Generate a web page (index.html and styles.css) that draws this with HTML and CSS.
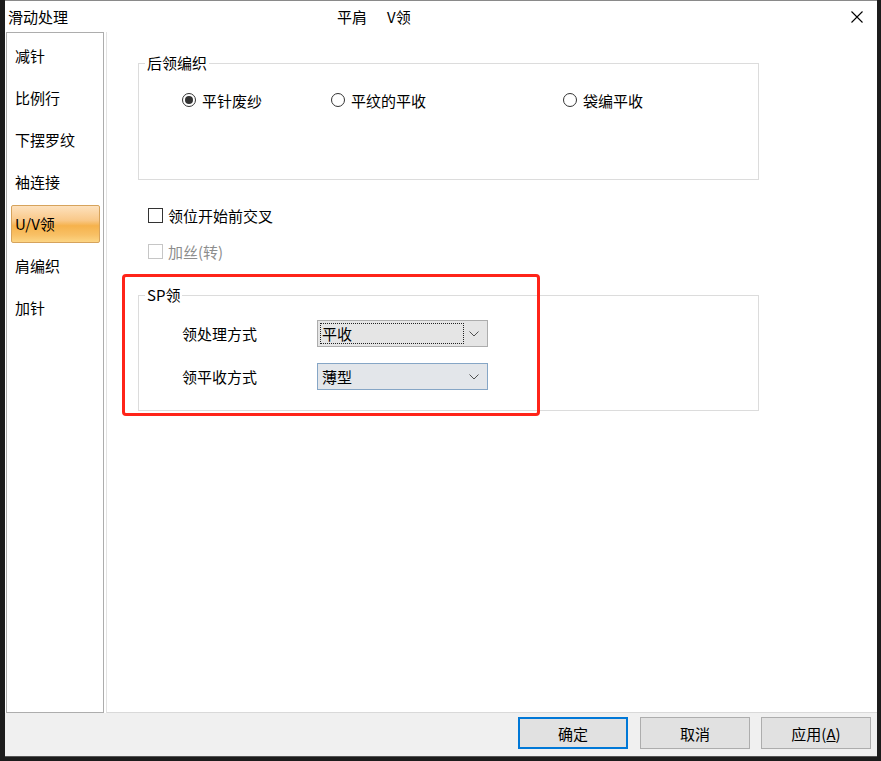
FILE: index.html
```html
<!DOCTYPE html>
<html lang="zh-CN">
<head>
    <meta charset="UTF-8">
    <title>滑动处理</title>
    <link rel="stylesheet" href="styles.css">
</head>
<body>
    <div class="window">
        <div class="titlebar">
            <span class="title">滑动处理</span>
            <span class="subtitle">平肩</span>
            <span class="subtitle second">V领</span>
            <svg class="close" width="12" height="12" viewBox="0 0 12 12">
                <path d="M0.5 0.5 L11.5 11.5 M11.5 0.5 L0.5 11.5" stroke="#000" stroke-width="1.1" fill="none"/>
            </svg>
        </div>

        <div class="main">
            <ul class="nav">
                <li>减针</li>
                <li>比例行</li>
                <li>下摆罗纹</li>
                <li>袖连接</li>
                <li class="active">U/V领</li>
                <li>肩编织</li>
                <li>加针</li>
            </ul>

            <div class="content">
                <fieldset class="group group-back">
                    <legend>后领编织</legend>
                    <div class="radio-row">
                        <label class="radio first"><span class="dot checked"></span>平针废纱</label>
                        <label class="radio second"><span class="dot"></span>平纹的平收</label>
                        <label class="radio"><span class="dot"></span>袋编平收</label>
                    </div>
                </fieldset>

                <label class="check"><span class="box"></span>领位开始前交叉</label>
                <label class="check disabled"><span class="box"></span>加丝(转)</label>

                <fieldset class="group group-sp">
                    <legend>SP领</legend>
                    <div class="field-row">
                        <span class="field-label">领处理方式</span>
                        <div class="combo focused">
                            <span class="combo-text">平收</span>
                            <svg class="chevron" width="10" height="6" viewBox="0 0 10 6"><path d="M0.5 0.5 L5 5 L9.5 0.5" stroke="#505050" fill="none"/></svg>
                        </div>
                    </div>
                    <div class="field-row">
                        <span class="field-label">领平收方式</span>
                        <div class="combo hover">
                            <span class="combo-text">薄型</span>
                            <svg class="chevron" width="10" height="6" viewBox="0 0 10 6"><path d="M0.5 0.5 L5 5 L9.5 0.5" stroke="#505050" fill="none"/></svg>
                        </div>
                    </div>
                </fieldset>

                <div class="highlight"></div>
            </div>
        </div>

        <div class="footer">
            <button class="btn default">确定</button>
            <button class="btn">取消</button>
            <button class="btn">应用(<u>A</u>)</button>
        </div>
    </div>
</body>
</html>
```

FILE: styles.css
```css
body {
    margin: 0;
    padding: 0;
    background: #1c1c1c;
    font-family: "Noto Sans CJK SC", "Noto Sans", sans-serif;
    font-size: 15px;
    color: #000;
    width: 881px;
    height: 761px;
    overflow: hidden;
}

.window {
    margin-left: 5px;
    width: 872px;
    height: 757px;
    background: #fff;
    border-top: 1px solid #8a8a8a;
    border-bottom: 1px solid #555;
    display: flex;
    flex-direction: column;
    box-sizing: border-box;
}

/* title bar */
.titlebar {
    height: 31px;
    display: flex;
    align-items: center;
    flex-shrink: 0;
}

.title {
    margin-left: 3px;
}

.subtitle {
    margin-left: 269px;
}

.subtitle.second {
    margin-left: 20px;
}

.close {
    margin-left: auto;
    margin-right: 14px;
}

/* main area */
.main {
    flex: 1;
    display: flex;
}

.nav {
    list-style: none;
    margin: 0 0 0 1px;
    padding: 4px 0 0 0;
    width: 98px;
    border: 1px solid #adadad;
    box-sizing: border-box;
    background: #fff;
}

.nav li {
    height: 38px;
    line-height: 36px;
    margin: 0 3px 4px 4px;
    padding-left: 3px;
    border: 1px solid transparent;
    border-radius: 2px;
    box-sizing: border-box;
}

.nav li.active {
    background: linear-gradient(#fde1bd 0%, #f9c888 40%, #f6b24c 55%, #f8c065 80%, #fcd584 100%);
    border-color: #d6a35c;
}

.content {
    flex: 1;
    position: relative;
    margin-left: 2px;
    border-left: 1px solid #e3e3e3;
    border-bottom: 1px solid #d9d9d9;
    padding: 21px 0 0 31px;
    display: flex;
    flex-direction: column;
    align-items: flex-start;
}

/* group boxes */
.group {
    width: 621px;
    box-sizing: border-box;
    margin: 0;
    border: 1px solid #dcdcdc;
    padding: 0 0 0 6px;
}

.group legend {
    padding: 0 2px;
    line-height: 20px;
}

.group-back {
    padding-top: 17px;
    padding-bottom: 69px;
}

.radio-row {
    display: flex;
    margin-left: 37px;
    height: 20px;
    align-items: center;
}

.radio {
    display: flex;
    align-items: center;
}

.radio.first {
    width: 149px;
}

.radio.second {
    width: 232px;
}

.dot {
    flex-shrink: 0;
    width: 14px;
    height: 14px;
    border: 1px solid #333;
    border-radius: 50%;
    box-sizing: border-box;
    margin-right: 6px;
    position: relative;
    background: #fff;
}

.dot.checked::after {
    content: "";
    position: absolute;
    left: 2px;
    top: 2px;
    width: 8px;
    height: 8px;
    border-radius: 50%;
    background: #333;
}

/* checkboxes */
.check {
    display: flex;
    align-items: center;
    height: 20px;
    margin-left: 10px;
}

.check:first-of-type {
    margin-top: 25px;
}

.check + .check {
    margin-top: 16px;
}

.box {
    flex-shrink: 0;
    width: 15px;
    height: 15px;
    border: 1px solid #333;
    box-sizing: border-box;
    margin-right: 5px;
    background: #fff;
}

.check.disabled {
    color: #8d8d8d;
}

.check.disabled .box {
    border-color: #c6c6c6;
}

.group-sp {
    margin-top: 24px;
    padding-top: 15px;
    padding-bottom: 20px;
}

.field-row {
    display: flex;
    align-items: center;
    margin-left: 37px;
    height: 27px;
}

.field-row + .field-row {
    margin-top: 16px;
}

.field-label {
    width: 135px;
}

.combo {
    width: 171px;
    height: 27px;
    box-sizing: border-box;
    border: 1px solid #adadad;
    background: #e5e5e5;
    display: flex;
    align-items: center;
    padding: 2px 8px 2px 2px;
}

.combo.hover {
    border-color: #86a6c6;
    background: #e3e6ea;
}

.combo-text {
    flex: 0 0 144px;
    height: 21px;
    line-height: 20px;
    box-sizing: border-box;
    padding-left: 1px;
    border: 1px dotted transparent;
}

.combo.focused .combo-text {
    border-color: #222;
}

.chevron {
    margin-left: auto;
}

/* annotation box */
.highlight {
    position: absolute;
    left: 15px;
    top: 242px;
    width: 418px;
    height: 142px;
    box-sizing: border-box;
    border: 3px solid #ff2419;
    border-radius: 4px;
}

/* footer */
.footer {
    height: 43px;
    flex-shrink: 0;
    background: #f0f0f0;
    display: flex;
    justify-content: flex-end;
    align-items: flex-start;
    padding: 4px 6px 0 0;
    box-sizing: border-box;
    gap: 11px;
}

.btn {
    width: 110px;
    height: 32px;
    font-family: inherit;
    font-size: 15px;
    background: #e1e1e1;
    border: 1px solid #adadad;
    color: #000;
    padding: 0;
}

.btn.default {
    border: 2px solid #0078d7;
    margin-right: 1px;
}
```
